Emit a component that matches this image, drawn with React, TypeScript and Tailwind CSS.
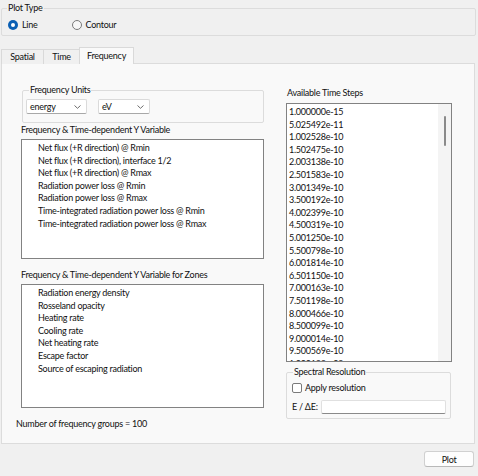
import React, { useState } from 'react';

const FONT = "font-['Lato','Liberation_Sans',sans-serif]";

const yVariables = [
  'Net flux (+R direction) @ Rmin',
  'Net flux (+R direction), interface 1/2',
  'Net flux (+R direction) @ Rmax',
  'Radiation power loss @ Rmin',
  'Radiation power loss @ Rmax',
  'Time-integrated radiation power loss @ Rmin',
  'Time-integrated radiation power loss @ Rmax',
];

const zoneVariables = [
  'Radiation energy density',
  'Rosseland opacity',
  'Heating rate',
  'Cooling rate',
  'Net heating rate',
  'Escape factor',
  'Source of escaping radiation',
];

const timeSteps = [
  '1.000000e-15', '5.025492e-11', '1.002528e-10', '1.502475e-10', '2.003138e-10',
  '2.501583e-10', '3.001349e-10', '3.500192e-10', '4.002399e-10', '4.500319e-10',
  '5.001250e-10', '5.500798e-10', '6.001814e-10', '6.501150e-10', '7.000163e-10',
  '7.501198e-10', '8.000466e-10', '8.500099e-10', '9.000014e-10', '9.500569e-10',
  '1.000123e-09',
];

const Chevron = () => (
  <svg width="7" height="4" viewBox="0 0 7 4" className="shrink-0">
    <path d="M0.5 0.5 L3.5 3.3 L6.5 0.5" fill="none" stroke="#5c5c5c" strokeWidth="0.9" />
  </svg>
);

const Combo: React.FC<{ value: string; width: string }> = ({ value, width }) => (
  <div className={`${width} h-[15px] flex items-center justify-between pl-[3px] pr-[5px] bg-white border border-[#dadada] border-b-[#a8a8a8] rounded-[2px]`}>
    <span className="leading-none">{value}</span>
    <Chevron />
  </div>
);

const Radio: React.FC<{ checked: boolean; label: string; onClick: () => void }> = ({ checked, label, onClick }) => (
  <div className="flex items-center gap-[4px] cursor-default" onClick={onClick}>
    {checked ? (
      <div className="w-[10px] h-[10px] rounded-full bg-[#0a5fb4] flex items-center justify-center">
        <div className="w-[4px] h-[4px] rounded-full bg-white" />
      </div>
    ) : (
      <div className="w-[10px] h-[10px] rounded-full border border-[#7a7a7a] bg-[#f7f7f7]" />
    )}
    <span>{label}</span>
  </div>
);

const ListBox: React.FC<{ items: string[]; className: string }> = ({ items, className }) => (
  <div className={`bg-white border border-[#828282] pt-[2px] pl-[16px] ${className}`}>
    {items.map((it) => (
      <div key={it} className="leading-[12.6px] whitespace-nowrap">{it}</div>
    ))}
  </div>
);

export default function App() {
  const [plotType, setPlotType] = useState<'line' | 'contour'>('line');
  const [tab, setTab] = useState('Frequency');
  const tabs = [
    { name: 'Spatial', w: 'w-[42px]' },
    { name: 'Time', w: 'w-[36px]' },
    { name: 'Frequency', w: 'w-[55px]' },
  ];

  return (
    <div className={`w-[478px] h-[476px] bg-[#f0f0f0] text-[9px] tracking-[-0.25px] text-[#111] overflow-hidden flex flex-col ${FONT}`}>
      {/* Plot type group */}
      <fieldset className="mt-[2px] ml-[1px] w-[475px] h-[34px] border border-[#dcdcdc] rounded-[2px] px-[5px]">
        <legend className="px-[1px] leading-[12px]">Plot Type</legend>
        <div className="flex items-center gap-[34px] pl-[1px] mt-[4px]">
          <Radio checked={plotType === 'line'} label="Line" onClick={() => setPlotType('line')} />
          <Radio checked={plotType === 'contour'} label="Contour" onClick={() => setPlotType('contour')} />
        </div>
      </fieldset>

      {/* Tabs */}
      <div className="mt-[11px] ml-[1px] flex items-end h-[17px] relative z-10">
        {tabs.map((t) => (
          <div
            key={t.name}
            onClick={() => setTab(t.name)}
            className={
              t.name === tab
                ? `${t.w} h-[17px] bg-[#f9f9f9] border border-b-0 border-[#d9d9d9] flex items-center justify-center`
                : `${t.w} h-[15px] bg-[#f0f0f0] border border-b-0 border-r-0 border-[#d9d9d9] flex items-center justify-center`
            }
          >
            {t.name}
          </div>
        ))}
      </div>

      {/* Tab panel */}
      <div className="ml-[1px] w-[474px] h-[381px] -mt-[1px] bg-[#f9f9f9] border border-[#dcdcdc] flex">
        <div className="w-[268px] flex flex-col">
          <fieldset className="mt-[20px] ml-[20px] w-[242px] h-[39px] border border-[#dcdcdc] rounded-[2px] pl-[3px]">
            <legend className="ml-[3px] px-[1px] leading-[12px]">Frequency Units</legend>
            <div className="flex gap-[11px] mt-[3px]">
              <Combo value="energy" width="w-[61px]" />
              <Combo value="eV" width="w-[52px]" />
            </div>
          </fieldset>

          <div className="mt-[1px] ml-[19px] leading-[12px]">Frequency &amp; Time-dependent Y Variable</div>
          <ListBox items={yVariables} className="mt-[3px] ml-[19px] w-[243px] h-[120px]" />

          <div className="mt-[10px] ml-[19px] leading-[12px]">Frequency &amp; Time-dependent Y Variable for Zones</div>
          <ListBox items={zoneVariables} className="mt-[3px] ml-[19px] w-[243px] h-[124px]" />

          <div className="mt-[10px] ml-[14px] leading-[12px]">Number of frequency groups = 100</div>
        </div>

        <div className="pl-[16px] flex flex-col">
          <div className="mt-[23px] leading-[12px] pl-[1px]">Available Time Steps</div>
          <div className="mt-[4px] w-[166px] h-[259px] bg-white border border-[#828282] flex overflow-hidden">
            <div className="flex-1 pt-[2px] pl-[2px]">
              {timeSteps.map((s) => (
                <div key={s} className="leading-[12.6px]">{s}</div>
              ))}
            </div>
            <div className="w-[13px] bg-[#f4f4f4] flex justify-center">
              <div className="mt-[12px] w-[2px] h-[30px] rounded-full bg-[#8a8a8a]" />
            </div>
          </div>

          <fieldset className="mt-[4px] w-[165px] h-[53px] border border-[#dcdcdc] rounded-[2px] pl-[5px] pr-[4px]">
            <legend className="ml-[1px] px-[1px] leading-[12px]">Spectral Resolution</legend>
            <div className="flex items-center gap-[3px] mt-[3px]">
              <div className="w-[10px] h-[10px] rounded-[2px] border border-[#7a7a7a] bg-white" />
              <span>Apply resolution</span>
            </div>
            <div className="flex items-center mt-[5px]">
              <span className="w-[29px] whitespace-nowrap">E / ΔE:</span>
              <div className="flex-1 h-[14px] bg-white border border-[#e0e0e0] border-b-[#8a8a8a] rounded-[2px]" />
            </div>
          </fieldset>
        </div>
      </div>

      <div className="flex justify-end pr-[4px] mt-[7px]">
        <button className="w-[50px] h-[16px] bg-[#fdfdfd] border border-[#d0d0d0] border-b-[#b8b8b8] rounded-[3px] leading-none">
          Plot
        </button>
      </div>
    </div>
  );
}
